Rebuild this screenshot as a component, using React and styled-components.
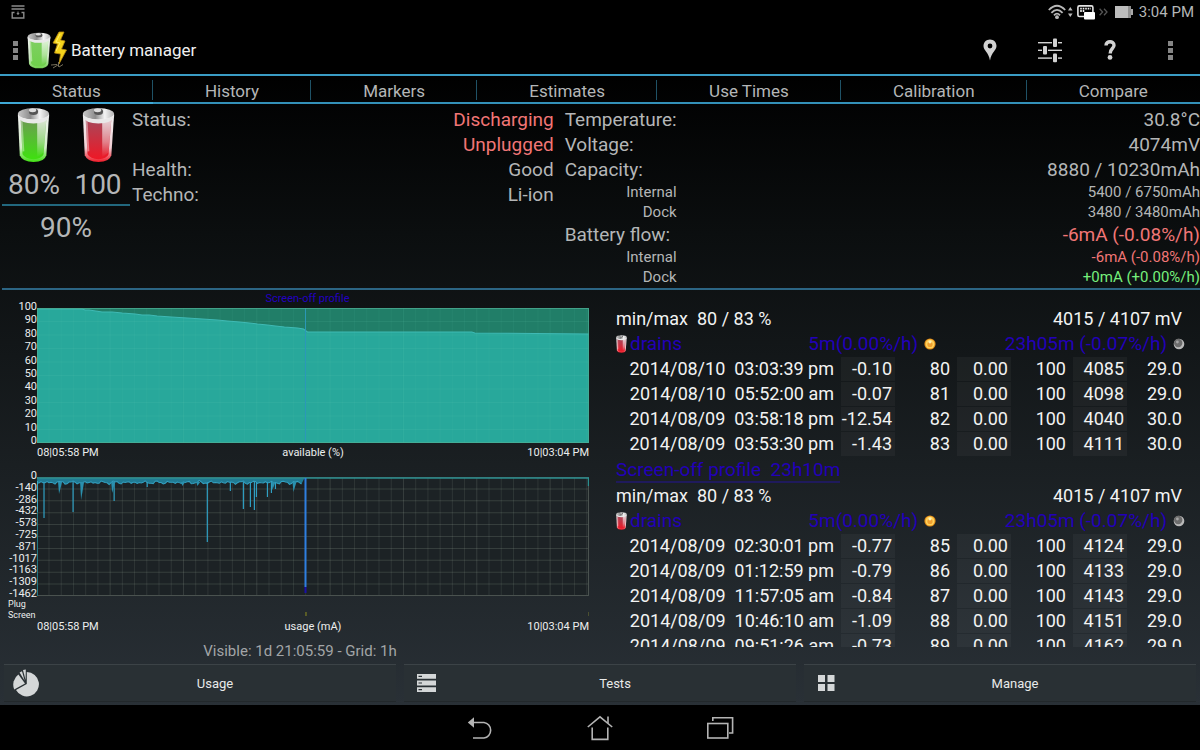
import React, { useState } from 'react';
import styled, { createGlobalStyle } from 'styled-components';

const GlobalStyle = createGlobalStyle`
  * {
    box-sizing: border-box;
  }
  body {
    margin: 0;
    background: #000;
    color: #b4b6b7;
    font-family: Roboto, "Liberation Sans", sans-serif;
  }
  button {
    font-family: inherit;
    border: 0;
    padding: 0;
    background: none;
    color: inherit;
    cursor: pointer;
  }
`;

const Screen = styled.div`
  display: flex;
  flex-direction: column;
  height: 100vh;
`;

const AppArea = styled.div`
  flex: 1;
  min-height: 0;
  display: flex;
  flex-direction: column;
  background: linear-gradient(#000 0%, #000 10%, #0b0e0f 33%, #1a1f22 66%, #293036 100%);
`;

const StatusBar = styled.div`
  display: flex;
  align-items: center;
  justify-content: space-between;
  height: 24px;
  padding: 0 6px 0 10px;
  font-size: 15px;
`;

const StatusIcons = styled.div`
  display: flex;
  align-items: center;
  gap: 4px;
`;

const ActionBar = styled.header`
  display: flex;
  align-items: center;
  height: 52px;
  padding: 2px 0 0 3px;
  border-bottom: 2px solid #3a9cc4;
`;

const AppTitle = styled.h1`
  flex: 1;
  margin: 0 0 0 2px;
  font-size: 17px;
  font-weight: 400;
  color: #f0f0f0;
`;

const IconButton = styled.button`
  display: flex;
  align-items: center;
  justify-content: center;
  width: ${(props) => props.$width || 60}px;
  height: 100%;
`;

const Tabs = styled.nav`
  display: flex;
  height: 28px;
  border-bottom: 2px solid #3390b8;
`;

const Tab = styled.button`
  display: flex;
  flex: 1 1 auto;
  align-items: center;
  justify-content: center;
  padding-top: 4px;
  font-size: 17px;
  box-shadow: ${(props) => (props.$active ? '0 2px #3fa9d6' : 'none')};
  background: linear-gradient(#1f5266, #1f5266) right 4px / 1px 20px no-repeat;

  &:last-child {
    background: none;
  }
`;

const Summary = styled.section`
  display: grid;
  grid-template-columns: 128px 13fr 19fr;
  margin-left: 2px;
  padding: 3px 0 0;
  height: 186px;
  flex: none;
  border-bottom: 2px solid #2c6584;
`;

const Levels = styled.div`
  display: flex;
  flex-direction: column;
`;

const LevelPair = styled.div`
  display: grid;
  grid-template-columns: 1fr 1fr;
  justify-items: center;
  border-bottom: 2px solid #22687e;
`;

const Level = styled.div`
  display: flex;
  flex-direction: column;
  align-items: center;
  font-size: 28px;
  line-height: ${(props) => (props.$total ? 44 : 38)}px;

  svg {
    margin-bottom: 3px;
  }
`;

const Facts = styled.dl`
  display: grid;
  grid-template-columns: auto 1fr;
  align-content: start;
  margin: 0;
  padding: ${(props) => (props.$side === 'left' ? '0 11px 0 2px' : '0')};
`;

const toneColors = { bad: '#f17676', good: '#76ef7c' };

const FactLabel = styled.dt`
  font-size: ${(props) => (props.$small ? 15 : 19)}px;
  line-height: ${(props) => (props.$small ? 20 : 25)}px;
  min-height: 20px;
  text-align: ${(props) => (props.$small ? 'right' : 'left')};
`;

const FactValue = styled.dd`
  margin: 0;
  font-size: ${(props) => (props.$small ? 15 : 19)}px;
  line-height: ${(props) => (props.$small ? 20 : 25)}px;
  text-align: right;
  color: ${(props) => toneColors[props.$tone] || 'inherit'};
`;

const Main = styled.main`
  flex: 1;
  min-height: 0;
  display: grid;
  grid-template-columns: 1fr 1fr;
  grid-template-rows: minmax(0, 1fr);
`;

const Charts = styled.section`
  padding: 18px 11px 0 0;
  color: #eceeee;
  font-size: 11px;
`;

const Chart = styled.div`
  display: grid;
  grid-template-columns: 37px 1fr;
`;

const YAxis = styled.div`
  display: flex;
  flex-direction: column;
  justify-content: space-between;
  margin: -7px 0 -3px;
  line-height: 11px;
  text-align: right;
`;

const Plot = styled.div`
  position: relative;
  height: ${(props) => props.$height}px;

  svg {
    display: block;
    width: 100%;
    height: 100%;
  }
`;

const MarkerLabel = styled.span`
  position: absolute;
  left: 49%;
  bottom: 100%;
  margin-bottom: 3px;
  line-height: 12px;
  color: #2200c0;
  white-space: nowrap;
  transform: translateX(-50%);
`;

const XAxis = styled.div`
  display: flex;
  justify-content: space-between;
  padding: ${(props) => (props.$tight ? '0' : '4px')} 0 0 37px;
  line-height: 12px;
`;

const Lanes = styled.div`
  display: grid;
  grid-template-columns: 37px 1fr;
  padding-top: 3px;
  font-size: 9px;
  line-height: 11px;

  span {
    padding-left: 8px;
  }
  svg {
    display: block;
    width: 100%;
    height: 11px;
  }
`;

const ChartGap = styled.div`
  height: 18px;
`;

const VisibleRange = styled.p`
  margin: 9px 0 0 11px;
  text-align: center;
  font-size: 15px;
  line-height: 18px;
  color: #a2a5a7;
`;

const LogPanel = styled.section`
  margin: 16px 15px 13px 16px;
  overflow-y: auto;
  scrollbar-width: none;
  font-size: 18px;
  line-height: 25px;
  color: #f2f3f3;
`;

const RangeRow = styled.div`
  display: flex;
  justify-content: space-between;
  padding-right: 3px;
`;

const DrainRow = styled.div`
  display: grid;
  grid-template-columns: 9fr 7fr;
  height: 25px;
  font-size: 19px;
  color: #2200b8;
`;

const DrainGroup = styled.div`
  display: flex;
  align-items: center;
  gap: 3px;
`;

const DrainValue = styled.span`
  display: flex;
  align-items: center;
  gap: 6px;
  margin-left: auto;
`;

const LogTable = styled.table`
  width: 100%;
  margin-top: 1px;
  table-layout: fixed;
  border-collapse: separate;
  border-spacing: 0;
`;

const LogCell = styled.td`
  width: 58px;
  height: 25px;
  padding: 0 3px 0 0;
  text-align: right;
  white-space: nowrap;
  border-left: 4px solid transparent;
  border-bottom: 1px solid transparent;
  background: ${(props) => (props.$shaded ? 'rgba(255, 255, 255, 0.04)' : 'none')};
  background-clip: padding-box;
  line-height: 24px;
`;

const DateCell = styled(LogCell)`
  width: auto;
  white-space: pre;
`;

const ProfileTitle = styled.a`
  display: block;
  width: max-content;
  height: 26px;
  font-size: 19px;
  color: #2200b8;
  text-decoration: none;
  white-space: pre;
  border-bottom: 2px solid #1f1a5c;
`;

const BottomBar = styled.div`
  display: grid;
  grid-template-columns: repeat(3, 1fr);
  gap: 8px;
  padding: 4px 4px 3px;
`;

const BottomButton = styled.button`
  display: flex;
  align-items: center;
  height: 38px;
  padding-left: 8px;
  font-size: 13px;
  color: #e8eaea;
  background: #293034;
  border-top: 1px solid #3c4347;
  border-bottom: 1px solid #22282b;

  svg {
    flex: none;
  }
  span {
    flex: 1;
    padding-right: 6px;
  }
`;

const NavBar = styled.footer`
  display: flex;
  justify-content: center;
  height: 45px;
  background: #000;
`;

const BatteryIcon = ({ color, width, height, id }) => (
  <svg width={width} height={height} viewBox="0 0 36 58" preserveAspectRatio="none" aria-hidden="true">
    <defs>
      <linearGradient id={`${id}-body`} x1="0" y1="0" x2="0" y2="1">
        <stop offset="0" stopColor={color.top} />
        <stop offset="1" stopColor={color.bottom} />
      </linearGradient>
      <linearGradient id={`${id}-cap`} x1="0" y1="0" x2="1" y2="0">
        <stop offset="0" stopColor="#c9c9c9" />
        <stop offset="0.4" stopColor="#8c8c8c" />
        <stop offset="0.7" stopColor="#f4f4f4" />
        <stop offset="1" stopColor="#b5b5b5" />
      </linearGradient>
      <linearGradient id={`${id}-gloss`} x1="0" y1="0" x2="0" y2="1">
        <stop offset="0" stopColor="#fff" stopOpacity="0.75" />
        <stop offset="0.6" stopColor="#fff" stopOpacity="0.4" />
        <stop offset="1" stopColor="#fff" stopOpacity="0" />
      </linearGradient>
      <linearGradient id={`${id}-rim`} x1="0" y1="0" x2="0" y2="1">
        <stop offset="0" stopColor="#f4f4f4" />
        <stop offset="0.7" stopColor={color.rim} />
        <stop offset="1" stopColor={color.bottom} />
      </linearGradient>
    </defs>
    <path d="M1 8 L3 50 Q6 57 18 57 Q30 57 32 50 L35 8 Z" fill={`url(#${id}-rim)`} />
    <path d="M4 13 L6 49 Q9 54 18 54 Q27 54 29 49 L32 13 Q18 19 4 13 Z" fill={`url(#${id}-body)`} />
    <path d="M22 16 L32 13 L29 47 L22 52 Z" fill={`url(#${id}-gloss)`} />
    <path d="M5 14 L7 46" stroke="#fff" strokeOpacity="0.4" strokeWidth="2" />
    <ellipse cx="18" cy="7" rx="17" ry="6" fill={`url(#${id}-cap)`} />
    <path d="M1 7 Q3 13 18 13 Q33 13 35 7 L35 10 Q32 17 18 17 Q4 17 1 10 Z" fill="#e9e9e9" />
    <ellipse cx="18" cy="5" rx="5" ry="3.4" fill="#555" />
    <ellipse cx="17" cy="3.4" rx="4" ry="2" fill="#ddd" />
  </svg>
);

const green = { top: '#6c9c52', bottom: '#3fe010', rim: '#d2ecc8' };
const softGreen = { top: '#7fcf62', bottom: '#6fd04b', rim: '#c8e6bd' };
const red = { top: '#a8485a', bottom: '#ee1826', rim: '#f0cfd4' };

const BoltIcon = () => (
  <svg width="18" height="38" viewBox="0 0 18 38" aria-hidden="true">
    <path d="M8 1 L13 1 L9.5 9 L14 10 L10.5 18 L15.5 19 L8 33 L9.5 23 L3.5 22 L6.5 13 L2 12 Z" fill="#f3d21b" stroke="#b98a10" strokeWidth="0.8" />
    <path d="M9 3 L5 11 L9 12 L5 20" fill="none" stroke="#fff066" strokeWidth="1" />
    <path d="M0 34 L6 33.5 L8 36 L12 33.5 M2 37 L6 34.5 M7.5 31 L7.5 35" fill="none" stroke="#77705c" strokeWidth="1" />
  </svg>
);

const OverflowIcon = () => (
  <svg width="5" height="19" viewBox="0 0 5 19" fill="#858585" aria-hidden="true">
    <rect x="0" y="0" width="5" height="5" />
    <rect x="0" y="7" width="5" height="5" />
    <rect x="0" y="14" width="5" height="5" />
  </svg>
);

const PinIcon = () => (
  <svg width="14" height="22" viewBox="0 0 14 22" aria-hidden="true">
    <path
      d="M7 0.5 C3.3 0.5 0.5 3.3 0.5 7 C0.5 11.5 5.5 13 7 21.5 C8.5 13 13.5 11.5 13.5 7 C13.5 3.3 10.7 0.5 7 0.5 Z M7 4.6 A2.4 2.4 0 1 1 7 9.4 A2.4 2.4 0 1 1 7 4.6 Z"
      fill="#d2d2d2"
      fillRule="evenodd"
    />
  </svg>
);

const SlidersIcon = () => (
  <svg width="24" height="25" viewBox="0 0 24 25" fill="#d2d2d2" aria-hidden="true">
    <rect x="0" y="4" width="14" height="1.4" />
    <rect x="20" y="4" width="4" height="1.4" />
    <rect x="15" y="0.5" width="4" height="8.6" rx="1" />
    <rect x="0" y="11.6" width="4" height="1.4" />
    <rect x="10" y="11.6" width="14" height="1.4" />
    <rect x="5" y="8" width="4" height="8.6" rx="1" />
    <rect x="0" y="19.4" width="14" height="1.4" />
    <rect x="20" y="19.4" width="4" height="1.4" />
    <rect x="15" y="15.6" width="4" height="8.6" rx="1" />
  </svg>
);

const HelpIcon = () => (
  <svg width="12" height="20" viewBox="0 0 12 20" aria-hidden="true">
    <path d="M2 5.4 C2 0.6 10 0.6 10 5.2 C10 8.6 6.2 8.6 6.2 13.4" fill="none" stroke="#d2d2d2" strokeWidth="3.4" />
    <circle cx="6" cy="17.4" r="2.4" fill="#d2d2d2" />
  </svg>
);

const NotificationIcon = () => (
  <svg width="16" height="14" viewBox="0 0 16 14" stroke="#8a8a8a" fill="none" aria-hidden="true">
    <path d="M1.5 1 H14.5 M1.5 4 H14.5" strokeWidth="1.4" />
    <path d="M4.5 7.5 H2.2 V13 H13.8 V7.5 H11.5" strokeWidth="1.4" />
    <path d="M8 6.5 V9 M7 8.4 L8 9.6 L9 8.4 Z" strokeWidth="1" fill="#8a8a8a" />
  </svg>
);

const WifiIcon = () => (
  <svg width="25" height="16" viewBox="0 0 25 16" aria-hidden="true">
    <g fill="none" stroke="#b8b8b8" strokeWidth="1.8">
      <path d="M0.8 6 Q9 -2.5 17.2 6" />
      <path d="M3.4 8.8 Q9 2.8 14.6 8.8" />
      <path d="M6 11.4 Q9 8 12 11.4" />
    </g>
    <circle cx="9" cy="13.2" r="1.9" fill="#b8b8b8" />
    <path d="M20 6.5 L22.3 3 L24.6 6.5 Z M20 9.5 L22.3 13 L24.6 9.5 Z" fill="#b8b8b8" />
  </svg>
);

const KeyboardIcon = () => (
  <svg width="18" height="15" viewBox="0 0 18 15" aria-hidden="true">
    <rect x="0.9" y="0.9" width="15" height="10.6" rx="1.5" fill="none" stroke="#e4e4e4" strokeWidth="1.6" />
    <path d="M3.2 3.6 H13.8 M3.2 6 H8" stroke="#f0f0f0" strokeWidth="1.8" strokeDasharray="1.6 0.9" />
    <rect x="7" y="7" width="11" height="7.5" rx="1" fill="#fff" />
  </svg>
);

const MoreIcon = () => (
  <svg width="12" height="8" viewBox="0 0 12 8" fill="none" stroke="#555" strokeWidth="1.3" aria-hidden="true">
    <path d="M0.6 0.8 L3.6 4 L0.6 7.2 M5 0.8 L8 4 L5 7.2" />
  </svg>
);

const BatteryBarIcon = () => (
  <svg width="20" height="12" viewBox="0 0 20 12" aria-hidden="true">
    <rect x="0" y="0" width="13" height="12" fill="#bdbdbd" />
    <rect x="13" y="0" width="3" height="12" fill="#909090" />
    <rect x="16" y="3" width="2" height="6" fill="#a8a8a8" />
  </svg>
);

const SunIcon = () => (
  <svg width="12" height="12" viewBox="0 0 12 12" aria-hidden="true">
    <circle cx="6" cy="6" r="5.6" fill="#e58e18" />
    <circle cx="6" cy="6" r="4.5" fill="#ffd15a" />
    <circle cx="6" cy="6.4" r="2.6" fill="#f0a030" />
    <circle cx="6" cy="3.8" r="1.6" fill="#fff0b0" />
  </svg>
);

const MoonIcon = () => (
  <svg width="12" height="12" viewBox="0 0 12 12" aria-hidden="true">
    <circle cx="6" cy="6" r="5.3" fill="#b9b9b9" />
    <circle cx="5.2" cy="5" r="4.2" fill="#6c6c6c" />
    <circle cx="4.4" cy="4" r="1.4" fill="#a5a5a5" />
  </svg>
);

const PieIcon = () => (
  <svg width="28" height="28" viewBox="0 0 28 28" fill="#d4d7d8" aria-hidden="true">
    <path d="M14.8 15 L14.8 3 A12.2 12.2 0 1 1 4 21 Z" />
    <path d="M13 14.6 L2.2 20.4 A12.4 12.4 0 0 1 6.4 5.6 Z" />
    <path d="M12.6 11.8 L7.6 3.4 L10 2.2 Z" />
    <path d="M13.6 11 L11 1 L13.8 0.5 Z" />
  </svg>
);

const StackIcon = () => (
  <svg width="28" height="20" viewBox="0 0 28 20" aria-hidden="true">
    <path d="M5 1 H24 V5.8 H5 Z M5 7.6 H24 V12.4 H5 Z M5 14.2 H24 V19 H5 Z" fill="#d4d7d8" />
    <path d="M6.5 3.4 H10 M6.5 10 H10 M6.5 16.6 H10" stroke="#293034" strokeWidth="1.2" />
  </svg>
);

const GridIcon = () => (
  <svg width="28" height="18" viewBox="0 0 28 18" fill="#d4d7d8" aria-hidden="true">
    <path d="M6 1 H13 V8 H6 Z M15.5 1 H22.5 V8 H15.5 Z M6 10 H13 V17 H6 Z M15.5 10 H22.5 V17 H15.5 Z" />
  </svg>
);

const BackIcon = () => (
  <svg width="26" height="24" viewBox="0 0 26 24" aria-hidden="true">
    <path d="M6 6.5 H17 A7.5 7.8 0 0 1 17 22 H6" fill="none" stroke="#b4b4b4" strokeWidth="1.6" />
    <path d="M0.8 6.5 L7 1.2 V11.8 Z" fill="#b4b4b4" />
  </svg>
);

const HomeIcon = () => (
  <svg width="26" height="26" viewBox="0 0 26 26" fill="none" stroke="#b4b4b4" strokeWidth="1.6" aria-hidden="true">
    <path d="M0.8 12 L13 1.8 L25.2 12" />
    <path d="M21 8 V1.5" />
    <path d="M5.2 12.5 V24.4 H20.8 V12.5" />
  </svg>
);

const RecentIcon = () => (
  <svg width="28" height="24" viewBox="0 0 28 24" fill="none" stroke="#b4b4b4" strokeWidth="1.6" aria-hidden="true">
    <path d="M6.8 5 V1.8 H26.6 V17 H23" />
    <rect x="1.8" y="7.5" width="20" height="14.5" />
  </svg>
);

const tabs = ['Status', 'History', 'Markers', 'Estimates', 'Use Times', 'Calibration', 'Compare'];

const leftFacts = [
  { label: 'Status:', value: 'Discharging', tone: 'bad' },
  { label: '', value: 'Unplugged', tone: 'bad' },
  { label: 'Health:', value: 'Good' },
  { label: 'Techno:', value: 'Li-ion' },
];

const rightFacts = [
  { label: 'Temperature:', value: '30.8°C' },
  { label: 'Voltage:', value: '4074mV' },
  { label: 'Capacity:', value: '8880 / 10230mAh' },
  { label: 'Internal', value: '5400 / 6750mAh', small: true },
  { label: 'Dock', value: '3480 / 3480mAh', small: true },
  { label: 'Battery flow:', value: '-6mA (-0.08%/h)', tone: 'bad' },
  { label: 'Internal', value: '-6mA (-0.08%/h)', tone: 'bad', small: true },
  { label: 'Dock', value: '+0mA (+0.00%/h)', tone: 'good', small: true },
];

const logSections = [
  {
    rows: [
      ['2014/08/10  03:03:39 pm', '-0.10', '80', '0.00', '100', '4085', '29.0'],
      ['2014/08/10  05:52:00 am', '-0.07', '81', '0.00', '100', '4098', '29.0'],
      ['2014/08/09  03:58:18 pm', '-12.54', '82', '0.00', '100', '4040', '30.0'],
      ['2014/08/09  03:53:30 pm', '-1.43', '83', '0.00', '100', '4111', '30.0'],
    ],
  },
  {
    title: 'Screen-off profile  23h10m',
    rows: [
      ['2014/08/09  02:30:01 pm', '-0.77', '85', '0.00', '100', '4124', '29.0'],
      ['2014/08/09  01:12:59 pm', '-0.79', '86', '0.00', '100', '4133', '29.0'],
      ['2014/08/09  11:57:05 am', '-0.84', '87', '0.00', '100', '4143', '29.0'],
      ['2014/08/09  10:46:10 am', '-1.09', '88', '0.00', '100', '4151', '29.0'],
      ['2014/08/09  09:51:26 am', '-0.73', '89', '0.00', '100', '4162', '29.0'],
    ],
  },
];

const availableTicks = [100, 90, 80, 70, 60, 50, 40, 30, 20, 10, 0];
const usageTicks = [0, -140, -286, -432, -578, -725, -871, -1017, -1163, -1309, -1462];

const PLOT_W = 551;
const MARKER_X = 268;
const hourLines = Array.from({ length: 45 }, (_, i) => 12 + i * 12.2);

const GridLines = ({ height, color }) => (
  <g stroke={color} strokeWidth="1">
    {hourLines.map((x, i) => (
      <line key={x} x1={x} x2={x} y1="0" y2={height} strokeOpacity={i % 6 === 5 ? 1 : 0.7} />
    ))}
    {usageTicks.map((t, i) => (
      <line key={t} x1="0" x2={PLOT_W} y1={(i * height) / 10} y2={(i * height) / 10} />
    ))}
  </g>
);

// battery level, stepping down about one percent at a time
const levelLine =
  '0,1 45,1 48,2 52,2 65,4 75,4 85,5 98,6 105,7 112,7 120,8 134,9 150,10 165,11 180,12 190,13 202,14 212,15 220,16 230,17 238,18 247,19 260,20 266,21 270,24 434,24 437,25 551,26';

const AvailablePlot = () => (
  <svg viewBox="0 0 551 135" preserveAspectRatio="none" role="img" aria-label="available (%)">
    <rect width="551" height="135" fill="#217e68" />
    <polygon points={`0,135 ${levelLine} 551,135`} fill="#28a89b" />
    <GridLines height={135} color="rgba(120, 215, 190, 0.1)" />
    <polyline points={levelLine} fill="none" stroke="#3fb9b4" strokeWidth="1" />
    <line x1={MARKER_X} x2={MARKER_X} y1="0" y2="135" stroke="#2c98b8" strokeWidth="1" />
    <rect x="0.5" y="0.5" width="550" height="134" fill="none" stroke="#4fae96" strokeOpacity="0.7" />
  </svg>
);

const spikes = [
  [7, 41], [36, 35], [77, 24], [110, 10], [170, 65], [193, 14], [206, 32], [213, 30],
  [217, 33], [219, 20], [230, 20], [234, 16], [238, 12],
];
const wedges = [[22, 17], [44, 23], [75, 16], [145, 9], [160, 9], [235, 13], [256, 15]];

const usageLine = Array.from({ length: 133 }, (_, i) => {
  const noise = (Math.sin(i * 2.3) + Math.sin(i * 0.9 + 1) + Math.sin(i * 5.1)) * 0.7;
  return `${i * 2},${(5.5 + noise).toFixed(1)}`;
}).join(' ');

const UsagePlot = () => (
  <svg viewBox="0 0 551 119" preserveAspectRatio="none" role="img" aria-label="usage (mA)">
    <rect width="551" height="119" fill="#1c2225" />
    <GridLines height={119} color="rgba(150, 165, 150, 0.22)" />
    <rect x="0.5" y="0.5" width="550" height="118" fill="none" stroke="#4a524f" />
    <polygon points={`0,1 ${usageLine} 267,1`} fill="#207a92" />
    <polyline points={usageLine} fill="none" stroke="#33a0c0" strokeWidth="1" />
    {spikes.map(([x, len]) => (
      <line key={x} x1={x} x2={x} y1="5" y2={len} stroke="#30a0c4" strokeWidth="1.2" />
    ))}
    {wedges.map(([x, len]) => (
      <polygon key={x} points={`${x - 1},5 ${x},${len} ${x + 3},5`} fill="#2a90ae" />
    ))}
    <path d="M0.5 0 V119" stroke="#1f7884" />
    <path d="M0.5 4 V35" stroke="#35a8c4" />
    <path d="M0 1 H551 M550.5 1 V9" stroke="#2b8f90" strokeWidth="1.4" fill="none" />
    <line x1={MARKER_X} x2={MARKER_X} y1="1" y2="110" stroke="#2f7fe0" strokeWidth="2" />
    <line x1={MARKER_X} x2={MARKER_X} y1="110" y2="116" stroke="#1a0fa8" strokeWidth="2" />
  </svg>
);

const FactList = ({ facts, side }) => (
  <Facts $side={side}>
    {facts.map((fact, i) => (
      <React.Fragment key={i}>
        <FactLabel $small={fact.small}>{fact.label}</FactLabel>
        <FactValue $small={fact.small} $tone={fact.tone}>{fact.value}</FactValue>
      </React.Fragment>
    ))}
  </Facts>
);

const LogSection = ({ section, index }) => (
  <>
    {section.title && <ProfileTitle href="#profile">{section.title}</ProfileTitle>}
    <RangeRow>
      <span>min/max&nbsp; 80 / 83 %</span>
      <span>4015 / 4107 mV</span>
    </RangeRow>
    <DrainRow>
      <DrainGroup>
        <BatteryIcon id={`drain${index}`} color={red} width={11} height={18} />
        <span>drains</span>
        <DrainValue>5m(0.00%/h)<SunIcon /></DrainValue>
      </DrainGroup>
      <DrainGroup>
        <DrainValue>23h05m (-0.07%/h)<MoonIcon /></DrainValue>
      </DrainGroup>
    </DrainRow>
    <LogTable>
      <tbody>
        {section.rows.map((row) => (
          <tr key={row[0]}>
            <DateCell>{row[0]}</DateCell>
            {row.slice(1).map((value, i) => (
              <LogCell key={i} $shaded={i % 2 === 0}>{value}</LogCell>
            ))}
          </tr>
        ))}
      </tbody>
    </LogTable>
  </>
);

const App = () => {
  const [activeTab, setActiveTab] = useState('Status');

  return (
    <>
      <GlobalStyle />
      <Screen>
        <AppArea>
          <StatusBar>
            <NotificationIcon />
            <StatusIcons>
              <WifiIcon />
              <KeyboardIcon />
              <MoreIcon />
              <BatteryBarIcon />
              <span>3:04 PM</span>
            </StatusIcons>
          </StatusBar>

          <ActionBar>
            <IconButton $width={24} aria-label="Open menu"><OverflowIcon /></IconButton>
            <BatteryIcon id="app" color={softGreen} width={24} height={37} />
            <BoltIcon />
            <AppTitle>Battery manager</AppTitle>
            <IconButton aria-label="Add marker"><PinIcon /></IconButton>
            <IconButton aria-label="Settings"><SlidersIcon /></IconButton>
            <IconButton aria-label="Help"><HelpIcon /></IconButton>
            <IconButton aria-label="More options"><OverflowIcon /></IconButton>
          </ActionBar>

          <Tabs>
            {tabs.map((tab) => (
              <Tab key={tab} $active={tab === activeTab} onClick={() => setActiveTab(tab)}>
                {tab}
              </Tab>
            ))}
          </Tabs>

          <Summary>
            <Levels>
              <LevelPair>
                <Level>
                  <BatteryIcon id="internal" color={green} width={33} height={56} />
                  80%
                </Level>
                <Level>
                  <BatteryIcon id="dock" color={red} width={33} height={56} />
                  100
                </Level>
              </LevelPair>
              <Level $total>90%</Level>
            </Levels>
            <FactList facts={leftFacts} side="left" />
            <FactList facts={rightFacts} side="right" />
          </Summary>

          <Main>
            <Charts>
              <Chart>
                <YAxis>
                  {availableTicks.map((tick) => <span key={tick}>{tick}</span>)}
                </YAxis>
                <Plot $height={135}>
                  <MarkerLabel>Screen-off profile</MarkerLabel>
                  <AvailablePlot />
                </Plot>
              </Chart>
              <XAxis>
                <span>08|05:58 PM</span>
                <span>available (%)</span>
                <span>10|03:04 PM</span>
              </XAxis>
              <ChartGap />
              <Chart>
                <YAxis>
                  {usageTicks.map((tick) => <span key={tick}>{tick}</span>)}
                </YAxis>
                <Plot $height={119}>
                  <UsagePlot />
                </Plot>
              </Chart>
              <Lanes>
                <span>Plug</span>
                <div />
                <span>Screen</span>
                <svg viewBox="0 0 551 11" preserveAspectRatio="none" aria-hidden="true">
                  <path d="M268.5 2 V6" stroke="#8f8f20" />
                  <path d="M550.5 2 V6" stroke="#4a4f30" />
                </svg>
              </Lanes>
              <XAxis $tight>
                <span>08|05:58 PM</span>
                <span>usage (mA)</span>
                <span>10|03:04 PM</span>
              </XAxis>
              <VisibleRange>Visible: 1d 21:05:59 - Grid: 1h</VisibleRange>
            </Charts>

            <LogPanel>
              {logSections.map((section, i) => (
                <LogSection key={i} section={section} index={i} />
              ))}
            </LogPanel>
          </Main>

          <BottomBar>
            <BottomButton><PieIcon /><span>Usage</span></BottomButton>
            <BottomButton><StackIcon /><span>Tests</span></BottomButton>
            <BottomButton><GridIcon /><span>Manage</span></BottomButton>
          </BottomBar>
        </AppArea>

        <NavBar>
          <IconButton $width={120} aria-label="Back"><BackIcon /></IconButton>
          <IconButton $width={120} aria-label="Home"><HomeIcon /></IconButton>
          <IconButton $width={120} aria-label="Recent apps"><RecentIcon /></IconButton>
        </NavBar>
      </Screen>
    </>
  );
};

export default App;
